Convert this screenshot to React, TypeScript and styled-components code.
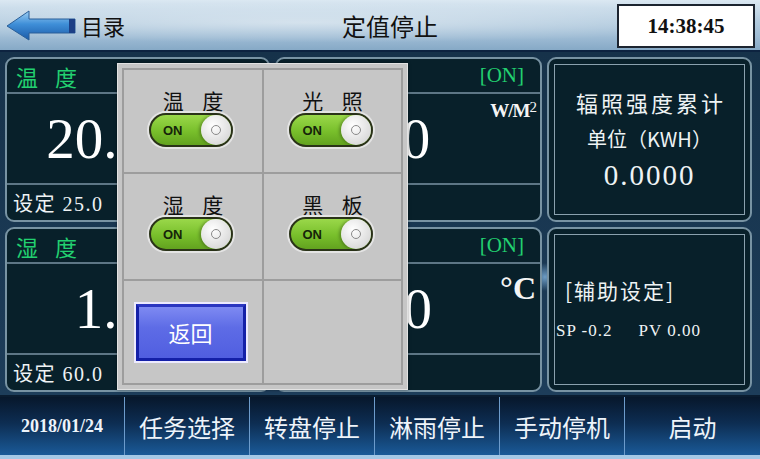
import { FC } from 'react';
import styled, { createGlobalStyle } from 'styled-components';

const GlobalStyle = createGlobalStyle`
  html, body {
    margin: 0;
    padding: 0;
    background: #0b1e2c;
  }
  * {
    box-sizing: border-box;
  }
`;

const SERIF = `"Liberation Serif", "Noto Sans CJK SC", serif`;
const CJK = `"Noto Sans CJK SC", "Liberation Serif", sans-serif`;

const BackArrow: FC = () => (
  <svg width="72" height="32" viewBox="0 0 72 32">
    <defs>
      <linearGradient id="arrowFill" x1="0" y1="0" x2="0" y2="1">
        <stop offset="0" stopColor="#9fd0f4" />
        <stop offset="0.45" stopColor="#3f8fd8" />
        <stop offset="1" stopColor="#1a5aa8" />
      </linearGradient>
    </defs>
    <path
      d="M2 17 L24 2 L24 10 L70 10 L70 24 L24 24 L24 31 Z"
      fill="url(#arrowFill)"
      stroke="#2a5f98"
      strokeWidth="1"
    />
    <rect x="64" y="10" width="6" height="14" fill="#1c3f86" />
  </svg>
);

const Switch: FC = () => (
  <Toggle>
    <ToggleText>ON</ToggleText>
    <Knob />
  </Toggle>
);

const App: FC = () => {
  return (
    <Screen>
      <GlobalStyle />
      <Header>
        <HeaderLeft>
          <BackArrow />
          <MenuLabel>目录</MenuLabel>
        </HeaderLeft>
        <Title>定值停止</Title>
        <HeaderRight>
          <Clock>14:38:45</Clock>
        </HeaderRight>
      </Header>

      <Main>
        <Card>
          <CardHead>
            <Label>温 度</Label>
          </CardHead>
          <CardBody>
            <Value $right={118}>20.0</Value>
          </CardBody>
          <CardFoot>设定 25.0</CardFoot>
        </Card>

        <Card>
          <CardHead>
            <Label />
            <Status>[ON]</Status>
          </CardHead>
          <CardBody>
            <Value $right={60}>0</Value>
            <Unit>
              W/M<sup>2</sup>
            </Unit>
          </CardBody>
          <CardFoot />
        </Card>

        <InfoCard>
          <InfoInner>
            <InfoTitle>辐照强度累计</InfoTitle>
            <InfoSub>单位（KWH）</InfoSub>
            <InfoValue>0.0000</InfoValue>
          </InfoInner>
        </InfoCard>

        <Card>
          <CardHead>
            <Label>湿 度</Label>
          </CardHead>
          <CardBody>
            <Value $right={118}>1.0</Value>
          </CardBody>
          <CardFoot>设定 60.0</CardFoot>
        </Card>

        <Card>
          <CardHead>
            <Label />
            <Status>[ON]</Status>
          </CardHead>
          <CardBody>
            <Value $right={68}>0</Value>
            <Unit $big>°C</Unit>
          </CardBody>
          <CardFoot />
        </Card>

        <InfoCard>
          <InfoInner $left>
            <AuxTitle>[辅助设定]</AuxTitle>
            <AuxLine>
              <span>SP -0.2</span>
              <span>PV 0.00</span>
            </AuxLine>
          </InfoInner>
        </InfoCard>

        <Popup>
          <PopupGrid>
            <Cell>
              <CellLabel>温 度</CellLabel>
              <Switch />
            </Cell>
            <Cell $last>
              <CellLabel>光 照</CellLabel>
              <Switch />
            </Cell>
            <Cell>
              <CellLabel>湿 度</CellLabel>
              <Switch />
            </Cell>
            <Cell $last>
              <CellLabel>黑 板</CellLabel>
              <Switch />
            </Cell>
            <Cell $bottom $center>
              <ReturnButton>返回</ReturnButton>
            </Cell>
            <Cell $bottom $last />
          </PopupGrid>
        </Popup>
      </Main>

      <Footer>
        <FootItem $date>2018/01/24</FootItem>
        <FootItem>任务选择</FootItem>
        <FootItem>转盘停止</FootItem>
        <FootItem>淋雨停止</FootItem>
        <FootItem>手动停机</FootItem>
        <FootItem $wide>启动</FootItem>
      </Footer>
    </Screen>
  );
};

const Screen = styled.div`
  width: 760px;
  height: 459px;
  display: flex;
  flex-direction: column;
  overflow: hidden;
`;

const Header = styled.header`
  height: 52px;
  flex: none;
  display: grid;
  grid-template-columns: 1fr auto 1fr;
  align-items: center;
  border-bottom: 2px solid #0d2340;
  background:
    radial-gradient(ellipse 60% 40% at 40% 45%, rgba(255, 255, 255, 0.45), transparent),
    linear-gradient(180deg, #dbe8f2 0%, #b5cde0 40%, #9dbbd4 75%, #86a9c6 100%);
`;

const HeaderLeft = styled.div`
  display: flex;
  align-items: center;
  gap: 4px;
  padding-left: 5px;
`;

const MenuLabel = styled.span`
  font-family: ${CJK};
  font-size: 22px;
  color: #111;
`;

const Title = styled.h1`
  margin: 0;
  padding-left: 20px;
  font-family: ${CJK};
  font-weight: 400;
  font-size: 24px;
  color: #111;
`;

const HeaderRight = styled.div`
  display: flex;
  justify-content: flex-end;
  padding-right: 5px;
`;

const Clock = styled.div`
  width: 138px;
  height: 44px;
  margin-top: 2px;
  display: flex;
  align-items: center;
  justify-content: center;
  background: #fff;
  border: 2px solid #1c2430;
  font-family: ${SERIF};
  font-weight: 700;
  font-size: 21px;
  color: #111;
`;

const Main = styled.main`
  position: relative;
  flex: 1;
  display: grid;
  grid-template-columns: 265px 267px 205px;
  grid-template-rows: 165px 165px;
  gap: 5px;
  padding: 5px 8px 0 5px;
  background:
    radial-gradient(circle at 272px 225px, #6d9cc4 0, transparent 14px),
    radial-gradient(circle at 545px 225px, #6d9cc4 0, transparent 14px),
    linear-gradient(180deg, #16324a, #1d3d5a);
`;

const Card = styled.section`
  display: flex;
  flex-direction: column;
  background: #08202a;
  border: 2px solid #7893a3;
  border-radius: 9px;
  overflow: hidden;
`;

const CardHead = styled.div`
  height: 35px;
  flex: none;
  display: flex;
  align-items: center;
  justify-content: space-between;
  padding: 0 16px 0 9px;
  border-bottom: 2px solid #5d7685;
`;

const Label = styled.span`
  font-family: ${CJK};
  font-size: 22px;
  color: #22d070;
  letter-spacing: 6px;
`;

const Status = styled.span`
  font-family: ${SERIF};
  font-size: 21px;
  color: #22d070;
`;

const CardBody = styled.div`
  flex: 1;
  display: flex;
  align-items: flex-start;
  justify-content: flex-end;
  padding-right: 4px;
  border-bottom: 2px solid #5d7685;
`;

const Value = styled.span<{ $right: number }>`
  align-self: center;
  margin-right: ${(p) => p.$right}px;
  font-family: ${SERIF};
  font-size: 57px;
  line-height: 1;
  color: #fff;
`;

const Unit = styled.span<{ $big?: boolean }>`
  margin-top: ${(p) => (p.$big ? 6 : 5)}px;
  font-family: ${SERIF};
  font-weight: 700;
  font-size: ${(p) => (p.$big ? 32 : 19)}px;
  letter-spacing: ${(p) => (p.$big ? 0 : -1)}px;
  color: #f4f4f4;

  sup {
    font-size: 15px;
    font-weight: 400;
    vertical-align: 5px;
  }
`;

const CardFoot = styled.div`
  height: 35px;
  flex: none;
  display: flex;
  align-items: center;
  padding-left: 6px;
  font-family: ${SERIF};
  font-size: 20px;
  letter-spacing: 1.5px;
  color: #eef2f4;
`;

const InfoCard = styled.section`
  background: #08202a;
  border: 2px solid #7893a3;
  border-radius: 9px;
  padding: 5px;
  display: flex;
`;

const InfoInner = styled.div<{ $left?: boolean }>`
  flex: 1;
  border: 1px solid #8aa1ae;
  display: flex;
  flex-direction: column;
  align-items: ${(p) => (p.$left ? 'flex-start' : 'center')};
  justify-content: center;
  gap: ${(p) => (p.$left ? 16 : 6)}px;
  padding-bottom: ${(p) => (p.$left ? 4 : 2)}px;
  color: #eef3f4;
`;

const InfoTitle = styled.div`
  font-family: ${CJK};
  font-size: 22px;
  letter-spacing: 3px;
  margin-right: -3px;
`;

const InfoSub = styled.div`
  font-family: ${CJK};
  font-size: 20px;
`;

const InfoValue = styled.div`
  font-family: ${SERIF};
  font-size: 29px;
  letter-spacing: 2px;
`;

const AuxTitle = styled.div`
  padding-left: 10px;
  font-family: ${CJK};
  font-size: 21px;
  letter-spacing: 2px;
`;

const AuxLine = styled.div`
  display: flex;
  gap: 26px;
  padding-left: 1px;
  font-family: ${SERIF};
  font-size: 17px;
  letter-spacing: 1px;
`;

const Popup = styled.div`
  position: absolute;
  left: 117px;
  top: 11px;
  width: 291px;
  height: 327px;
  padding: 4px;
  background: #c6c6c6;
  border: 1px solid #e2e2e2;
  box-shadow: 0 0 3px rgba(0, 0, 0, 0.4);
`;

const PopupGrid = styled.div`
  height: 100%;
  display: grid;
  grid-template-columns: 140px 1fr;
  grid-template-rows: 104px 107px 1fr;
  border: 2px solid #9d9d9d;
`;

const Cell = styled.div<{ $last?: boolean; $bottom?: boolean; $center?: boolean }>`
  display: flex;
  flex-direction: column;
  align-items: center;
  justify-content: ${(p) => (p.$center ? 'center' : 'flex-start')};
  padding-top: ${(p) => (p.$center ? 0 : 18)}px;
  border-right: ${(p) => (p.$last ? 'none' : '2px solid #9d9d9d')};
  border-bottom: ${(p) => (p.$bottom ? 'none' : '2px solid #9d9d9d')};
`;

const CellLabel = styled.span`
  font-family: ${CJK};
  font-size: 21px;
  line-height: 24px;
  color: #111;
  letter-spacing: 7px;
  margin-right: -7px;
`;

const Toggle = styled.div`
  position: relative;
  width: 84px;
  height: 34px;
  margin-top: 1px;
  margin-left: -4px;
  display: flex;
  align-items: center;
  border-radius: 17px;
  border: 2px solid #2a3318;
  background: linear-gradient(180deg, #9ad84a 0%, #78bf2b 55%, #62a21f 100%);
  box-shadow: 0 0 0 2px #e4e4e4;
`;

const ToggleText = styled.span`
  padding-left: 12px;
  font-family: "Liberation Sans", Arial, sans-serif;
  font-weight: 700;
  font-size: 13px;
  color: #16240a;
`;

const Knob = styled.span`
  position: absolute;
  right: 0;
  top: 0;
  width: 30px;
  height: 30px;
  border-radius: 50%;
  background: radial-gradient(circle at 40% 35%, #ffffff, #dcdcdc 70%, #bdbdbd);
  box-shadow: -2px 0 3px rgba(0, 0, 0, 0.25);

  &::after {
    content: '';
    position: absolute;
    left: 10px;
    top: 10px;
    width: 8px;
    height: 8px;
    border-radius: 50%;
    border: 1px solid #8a8a8a;
  }
`;

const ReturnButton = styled.button`
  width: 110px;
  height: 57px;
  margin-right: 5px;
  border: 3px solid #1420a8;
  border-top-color: #2a36c0;
  background: linear-gradient(180deg, #7e8af2 0%, #5e6ce6 40%, #505ee0 100%);
  box-shadow: 0 0 0 2px #eceaff;
  font-family: ${CJK};
  font-size: 22px;
  color: #fff;
  cursor: pointer;
`;

const Footer = styled.footer`
  height: 64px;
  flex: none;
  display: flex;
  border-top: 2px solid #0a1c30;
  border-bottom: 4px solid #a4c8e6;
  background: linear-gradient(180deg, #07172b 0%, #0d2d52 45%, #1a5a98 100%);
`;

const FootItem = styled.div<{ $date?: boolean; $wide?: boolean }>`
  width: ${(p) => (p.$wide ? 135 : 125)}px;
  display: flex;
  align-items: center;
  justify-content: center;
  border-right: ${(p) => (p.$wide ? 'none' : '1px solid #6d9ccc')};
  font-family: ${(p) => (p.$date ? SERIF : CJK)};
  font-weight: ${(p) => (p.$date ? 700 : 400)};
  font-size: ${(p) => (p.$date ? 18 : 24)}px;
  color: #eef4fa;
`;

export default App;
